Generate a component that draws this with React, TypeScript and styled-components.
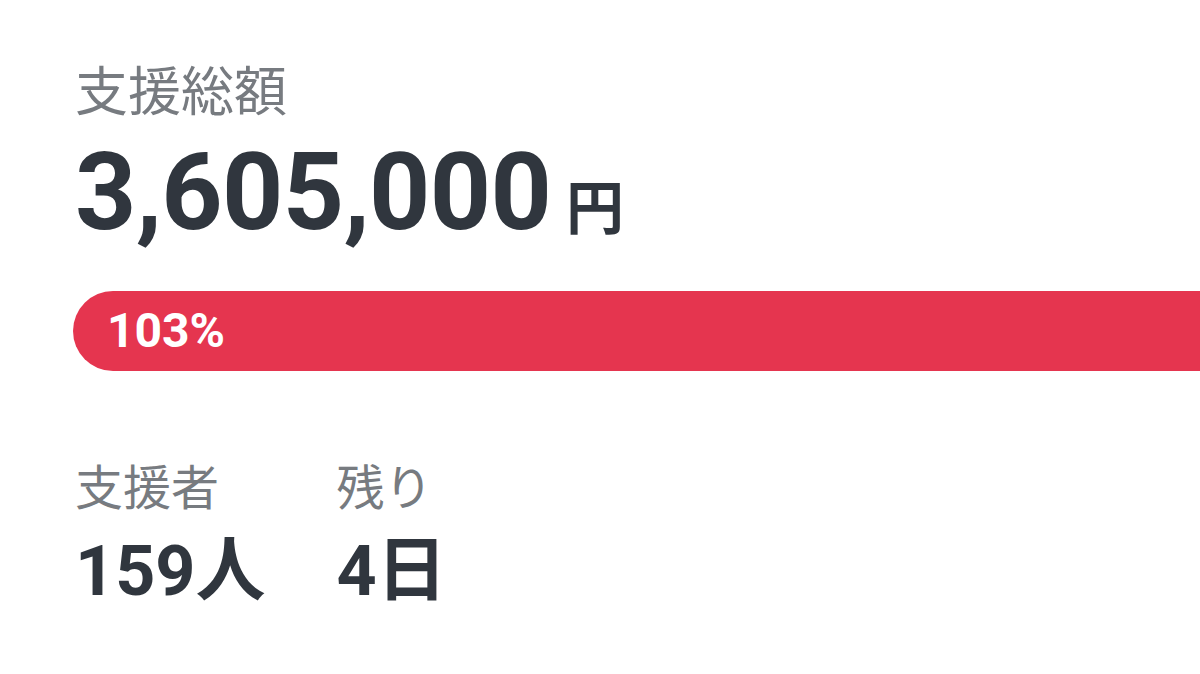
import React from "react";
import styled, { createGlobalStyle } from "styled-components";

const Global = createGlobalStyle`
  html, body { margin: 0; padding: 0; background: #ffffff; overflow: hidden; }
  body { font-family: Roboto, "Noto Sans CJK JP", sans-serif; }
`;

const Page = styled.div`
  width: 1200px;
  height: 674px;
  box-sizing: border-box;
  padding: 62px 0 0 75px;
  display: flex;
  flex-direction: column;
`;

const Label = styled.div`
  font-family: "Noto Sans CJK JP", sans-serif;
  font-size: ${(p: { size?: number }) => p.size ?? 53}px;
  line-height: 1;
  color: #777b80;
  font-weight: 400;
`;

const Amount = styled.div`
  margin-top: 24px;
  display: flex;
  align-items: baseline;
  color: #30363e;
  font-weight: 700;
  line-height: 1;
`;

const AmountNumber = styled.span`
  font-family: Roboto, sans-serif;
  font-size: 107px;
  letter-spacing: -0.7px;
`;

const Unit = styled.span`
  font-family: "Noto Sans CJK JP", sans-serif;
  font-size: 58px;
  font-weight: 700;
  margin-left: 15px;
`;

const Bar = styled.div`
  margin-top: 45px;
  margin-left: -2px;
  height: 80px;
  background: #e5354f;
  border-radius: 40px 0 0 40px;
  display: flex;
  align-items: center;
  padding-left: 34px;
`;

const BarText = styled.span`
  font-family: Roboto, sans-serif;
  font-weight: 700;
  font-size: 48px;
  line-height: 1;
  color: #ffffff;
`;

const Stats = styled.div`
  margin-top: 89px;
  display: flex;
  gap: 71px;
`;

const Stat = styled.div`
  display: flex;
  flex-direction: column;
`;

const StatValue = styled.div`
  margin-top: 28px;
  font-family: Roboto, "Noto Sans CJK JP", sans-serif;
  font-size: 70px;
  font-weight: 700;
  line-height: 1;
  color: #30363e;
`;

export default function App() {
  return (
    <>
      <Global />
      <Page>
        <Label>支援総額</Label>
        <Amount>
          <AmountNumber>3,605,000</AmountNumber>
          <Unit>円</Unit>
        </Amount>
        <Bar>
          <BarText>103%</BarText>
        </Bar>
        <Stats>
          <Stat>
            <Label size={48}>支援者</Label>
            <StatValue>159人</StatValue>
          </Stat>
          <Stat>
            <Label size={48}>残り</Label>
            <StatValue>4日</StatValue>
          </Stat>
        </Stats>
      </Page>
    </>
  );
}
